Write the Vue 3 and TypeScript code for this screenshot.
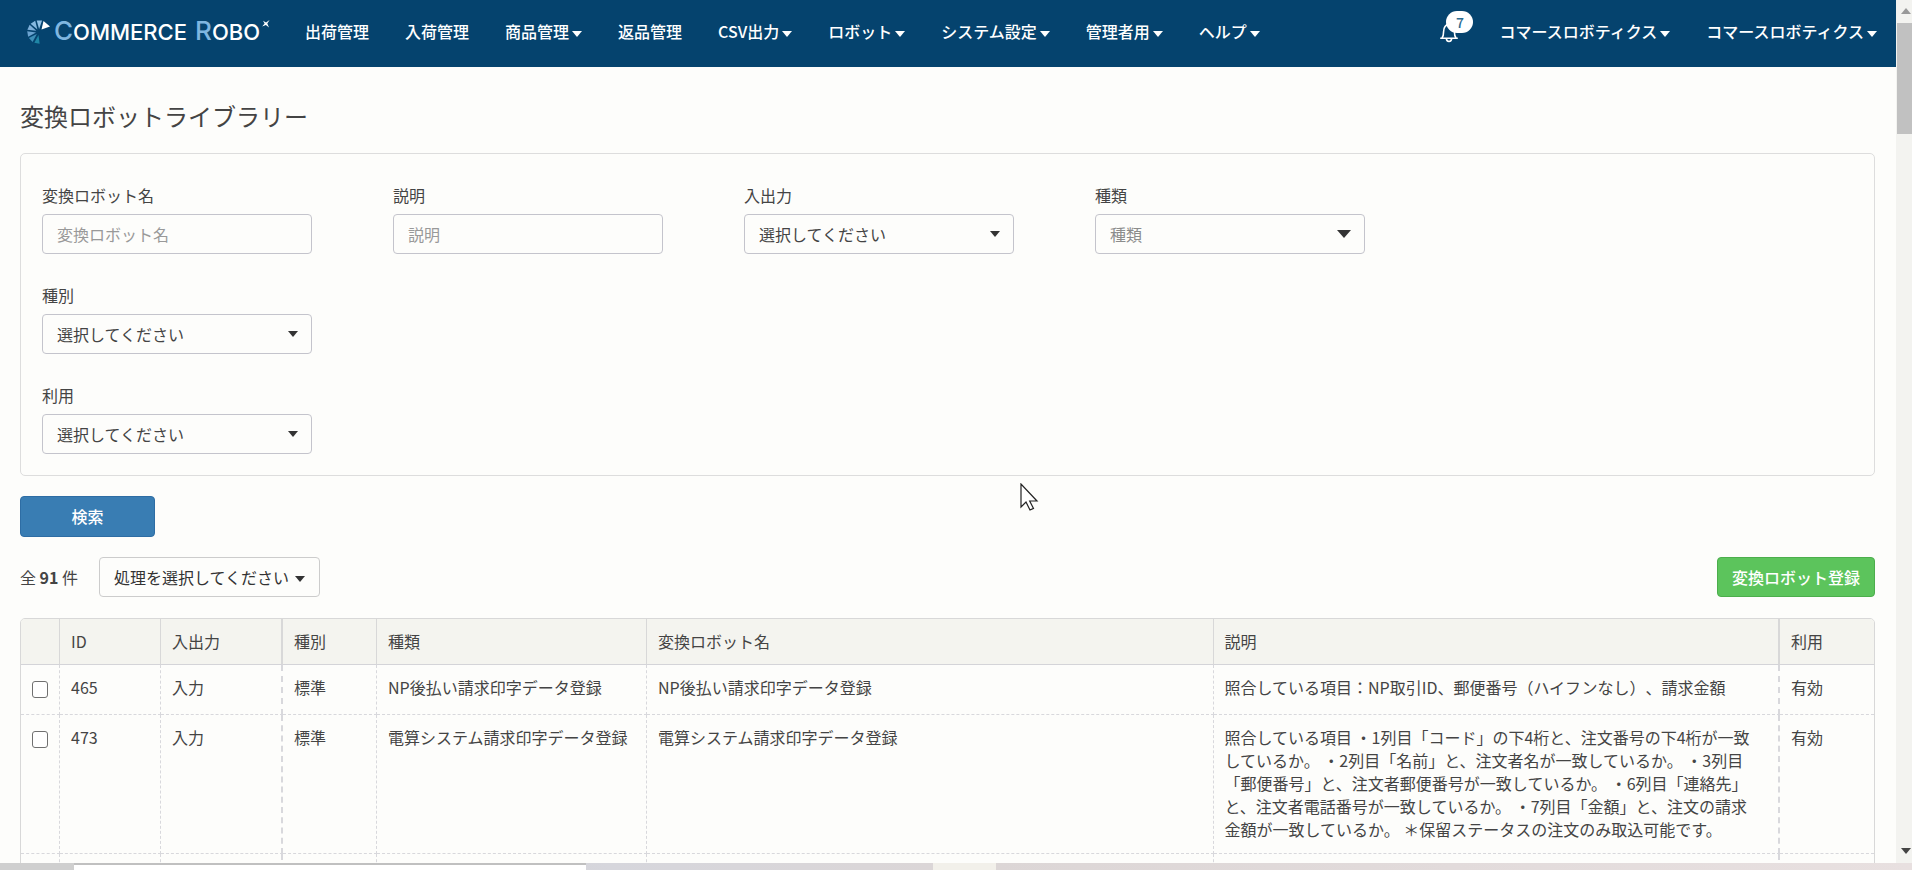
<script setup lang="ts">
interface NavItem { label: string; caret: boolean }
interface Field { id: string; label: string; kind: 'text' | 'select' | 'tags'; prompt: string }
interface Robot { id: string; io: string; type: string; kind: string; name: string; note: string; use: string }

const nav: NavItem[] = [
  { label: '出荷管理', caret: false },
  { label: '入荷管理', caret: false },
  { label: '商品管理', caret: true },
  { label: '返品管理', caret: false },
  { label: 'CSV出力', caret: true },
  { label: 'ロボット', caret: true },
  { label: 'システム設定', caret: true },
  { label: '管理者用', caret: true },
  { label: 'ヘルプ', caret: true },
]
const accounts: string[] = ['コマースロボティクス', 'コマースロボティクス']

const fieldRows: Field[][] = [
  [
    { id: 'name', label: '変換ロボット名', kind: 'text', prompt: '変換ロボット名' },
    { id: 'note', label: '説明', kind: 'text', prompt: '説明' },
    { id: 'io', label: '入出力', kind: 'select', prompt: '選択してください' },
    { id: 'kind', label: '種類', kind: 'tags', prompt: '種類' },
  ],
  [{ id: 'type', label: '種別', kind: 'select', prompt: '選択してください' }],
  [{ id: 'use', label: '利用', kind: 'select', prompt: '選択してください' }],
]

const columns: string[] = ['ID', '入出力', '種別', '種類', '変換ロボット名', '説明', '利用']
const robots: Robot[] = [
  {
    id: '465', io: '入力', type: '標準',
    kind: 'NP後払い請求印字データ登録', name: 'NP後払い請求印字データ登録',
    note: '照合している項目：NP取引ID、郵便番号（ハイフンなし）、請求金額', use: '有効',
  },
  {
    id: '473', io: '入力', type: '標準',
    kind: '電算システム請求印字データ登録', name: '電算システム請求印字データ登録',
    note: '照合している項目 ・1列目「コード」の下4桁と、注文番号の下4桁が一致しているか。 ・2列目「名前」と、注文者名が一致しているか。 ・3列目「郵便番号」と、注文者郵便番号が一致しているか。 ・6列目「連絡先」と、注文者電話番号が一致しているか。 ・7列目「金額」と、注文の請求金額が一致しているか。 ＊保留ステータスの注文のみ取込可能です。',
    use: '有効',
  },
]

const blades: { angle: number; color: string }[] = [
  { angle: 2, color: '#8fc1e6' },
  { angle: -32, color: '#86b9e0' },
  { angle: -66, color: '#7eb0da' },
  { angle: -100, color: '#6ba3d0' },
  { angle: -134, color: '#3f8fb8' },
  { angle: -170, color: '#1f86a6' },
]
</script>

<template>
  <div class="screen">
    <div class="view">
      <div class="page">
        <header class="bar">
          <a class="brand" href="#" aria-label="Commerce Robo">
            <svg class="wheel" width="24" height="24" viewBox="0 0 24 24" aria-hidden="true">
              <polygon
                v-for="b in blades" :key="b.angle" points="9.3,0.5 14.7,0.5 12,9"
                :fill="b.color" :transform="`rotate(${b.angle} 12 12)`"
              />
              <polygon points="16.5,1 23,6.5 14.5,9.5" fill="#fff" />
            </svg>
            <span class="word"><b>C</b>OMMERCE</span>
            <span class="word"><b>R</b>OBO</span>
            <svg class="spark" width="8" height="8" viewBox="0 0 8 8" aria-hidden="true">
              <path d="M7.6 0 5.3 3.6 7 7.4 3.9 5 .2 6.6 2.6 3.6 1 .8 4 2.6Z" fill="#fff" />
            </svg>
          </a>
          <nav class="menu">
            <a v-for="n in nav" :key="n.label" href="#">{{ n.label }}<i v-if="n.caret" class="caret" /></a>
          </nav>
          <nav class="menu right">
            <button class="bell" type="button" aria-label="通知">
              <svg width="20" height="22" viewBox="0 0 20 22" fill="none" stroke="#fff" stroke-width="1.6" aria-hidden="true">
                <path d="M1.2 17.2h17.6M3 17c1.2-1.6 1.6-3.4 1.6-6.6C4.6 6.4 6.6 3.4 10 3.4s5.4 3 5.4 7c0 3.2.4 5 1.6 6.6M7.4 17.6c0 3.8 5.2 3.8 5.2 0" />
              </svg>
              <span class="badge">7</span>
            </button>
            <a v-for="(a, i) in accounts" :key="i" href="#">{{ a }}<i class="caret" /></a>
          </nav>
        </header>

        <main>
          <h1>変換ロボットライブラリー</h1>
          <form class="panel" @submit.prevent>
            <div v-for="(row, r) in fieldRows" :key="r" class="fields">
              <div v-for="f in row" :key="f.id" class="field">
                <label :for="f.id">{{ f.label }}</label>
                <input v-if="f.kind === 'text'" :id="f.id" type="text" :placeholder="f.prompt">
                <div v-else class="pick" :class="f.kind">
                  <select :id="f.id"><option>{{ f.prompt }}</option></select>
                  <i class="caret" />
                </div>
              </div>
            </div>
          </form>
          <button class="btn search" type="button">検索</button>
          <div class="tools">
            <p>全 <strong>91</strong> 件</p>
            <button class="btn plain" type="button">処理を選択してください<i class="caret" /></button>
            <button class="btn add" type="button">変換ロボット登録</button>
          </div>
          <div class="sheet">
            <table>
              <colgroup>
                <col class="w-check"><col class="w-id"><col class="w-io"><col class="w-type">
                <col class="w-kind"><col><col><col class="w-use">
              </colgroup>
              <thead>
                <tr><th /><th v-for="c in columns" :key="c" scope="col">{{ c }}</th></tr>
              </thead>
              <tbody>
                <tr v-for="r in robots" :key="r.id">
                  <td class="check"><input type="checkbox" :aria-label="r.id"></td>
                  <td>{{ r.id }}</td><td>{{ r.io }}</td><td>{{ r.type }}</td>
                  <td>{{ r.kind }}</td><td>{{ r.name }}</td><td class="note">{{ r.note }}</td><td>{{ r.use }}</td>
                </tr>
                <tr><td v-for="n in 8" :key="n" /></tr>
              </tbody>
            </table>
          </div>
          <svg class="pointer" width="19" height="28" viewBox="0 0 19 28" aria-hidden="true">
            <path d="M1 1v23l5-5 4 8 3.5-1.6-3.8-7.4H17Z" fill="#fff" stroke="#222" stroke-width="1.2" />
          </svg>
        </main>
      </div>
      <div class="scroll" aria-hidden="true"><i class="up" /><i class="thumb" /><i class="down" /></div>
    </div>
    <div class="strip" aria-hidden="true"><i class="field-edge" /><i class="gap" /><i class="light" /></div>
  </div>
</template>

<style>
body { margin: 0; background: #fdfdfb; overflow: hidden; }
</style>

<style scoped>
* { box-sizing: border-box; }
.screen {
  display: flex; flex-direction: column; height: 100vh; overflow: hidden;
  color: #444; background: #fdfdfb;
  font: 16px/23px "Noto Sans CJK JP", "Noto Sans", sans-serif;
  text-spacing-trim: space-all;
}
button, input, select { font: inherit; color: inherit; }
a { color: inherit; text-decoration: none; }
.view { display: flex; flex: 1; min-height: 0; }
.page { flex: 1; min-width: 0; overflow: hidden; }
.caret {
  display: inline-block; margin-left: 3px; vertical-align: middle;
  border: 5px solid transparent; border-top: 6px solid; border-bottom: 0;
}

.bar {
  display: flex; align-items: center; height: 67px; padding: 0 1px 4px 27px;
  color: #fff; background: #05436e; font-weight: 500; white-space: nowrap;
}
.brand { position: relative; display: flex; align-items: center; width: 260px; height: 63px; }
.wheel { margin-right: 3px; }
.word { margin-right: 8px; font: 500 22px/32px Inter, sans-serif; }
.word b { color: #7fb6e0; font-weight: 500; font-size: 26px; }
.spark { position: absolute; left: 235px; top: 20px; }
.menu { display: flex; height: 63px; align-items: center; }
.menu a { padding: 0 18px; }
.right { margin-left: auto; }
.bell { position: relative; width: 20px; height: 22px; margin-right: 22px; padding: 0; border: 0; background: none; }
.bell svg { display: block; }
.badge {
  position: absolute; left: 7px; top: -10px; width: 27px; height: 22px; border-radius: 11px;
  color: #2a6a90; background: #fff; font-size: 14px; line-height: 22px; text-align: center;
}

main { position: relative; padding: 31px 21px 0 20px; }
h1 { margin: 0 0 19px; font-size: 24px; line-height: 36px; font-weight: 400; }
.panel { padding: 30px 21px 21px; border: 1px solid #ddd; border-radius: 5px; }
.fields { display: flex; gap: 81px; }
.fields + .fields { margin-top: 30px; }
.field { width: 270px; }
label { display: block; margin-bottom: 7px; }
.field input, .pick select {
  display: block; width: 100%; height: 40px; padding: 0 14px;
  border: 1px solid #c4c4cc; border-radius: 4px; background: transparent; appearance: none;
}
.field input::placeholder { color: #999; opacity: 1; }
.pick { display: grid; align-items: center; }
.pick > * { grid-area: 1 / 1; }
.pick .caret { justify-self: end; margin-right: 14px; pointer-events: none; color: #333; }
.tags select { color: #8c8c8c; }
.tags .caret { border-width: 8px 7px 0; }

.btn { height: 40px; border: 1px solid; border-radius: 4px; white-space: nowrap; }
.search {
  display: block; width: 135px; height: 41px; margin-top: 20px;
  color: #fff; background: #397db3; border-color: #2e6da4; font-weight: 500;
}
.tools { display: flex; align-items: center; margin-top: 20px; }
.tools p { margin: 0 21px 0 0; }
.tools strong { font-weight: 700; }
.plain { padding: 0 14px; color: #333; background: transparent; border-color: #ccc; }
.plain .caret { margin-left: 6px; }
.add { margin-left: auto; padding: 0 14px; color: #fff; background: #5cc45c; border-color: #4cae4c; font-weight: 500; }

.sheet { margin-top: 21px; border: 1px solid #d8d8d8; border-radius: 5px; overflow: hidden; }
table { width: 100%; table-layout: fixed; border-collapse: separate; border-spacing: 0; }
.w-check { width: 39px; }
.w-id { width: 101px; }
.w-io { width: 122px; }
.w-type { width: 94px; }
.w-kind { width: 270px; }
.w-use { width: 94px; }
th, td { padding: 11px; text-align: left; vertical-align: top; font-weight: 400; }
th { height: 46px; background: #f4f4ef; border-bottom: 1px solid #d4d4d8; border-right: 1px solid #d8d8d8; }
td { height: 50px; padding-bottom: 12px; border-bottom: 1px dashed #d8d8dc; border-right: 1px dashed #d8d8dc; }
th:nth-child(3), td:nth-child(3), th:nth-child(7), td:nth-child(7) { border-right-width: 2px; }
th:last-child, td:last-child { border-right: 0; }
.note { padding-right: 20px; }
.check { padding: 16px 0 0 11px; }
.check input {
  display: block; width: 16px; height: 17px; margin: 0; appearance: none;
  border: 1px solid #707070; border-radius: 3px; background: #fff;
}
.pointer { position: absolute; left: 1020px; top: 416px; }

.scroll { position: relative; width: 16px; background: #f3f3f0; }
.scroll i { position: absolute; }
.up, .down { left: 5px; border: 5px solid transparent; }
.up { top: 8px; border-bottom: 6px solid #999; border-top: 0; }
.down { bottom: 9px; border-top: 6px solid #444; border-bottom: 0; }
.thumb { left: 1px; right: 0; top: 23px; height: 111px; background: #c1c1c1; }
.strip { display: flex; height: 7px; padding-left: 74px; background: linear-gradient(90deg, #cfcfcf 5%, #d6d6dc 32%, #dcd6d6 52%, #e8e0e0); }
.field-edge { width: 512px; background: #fff; border-top: 2px solid #c0c0c0; }
.gap { width: 347px; }
.light { width: 63px; background: #f2f0ea; }
</style>
